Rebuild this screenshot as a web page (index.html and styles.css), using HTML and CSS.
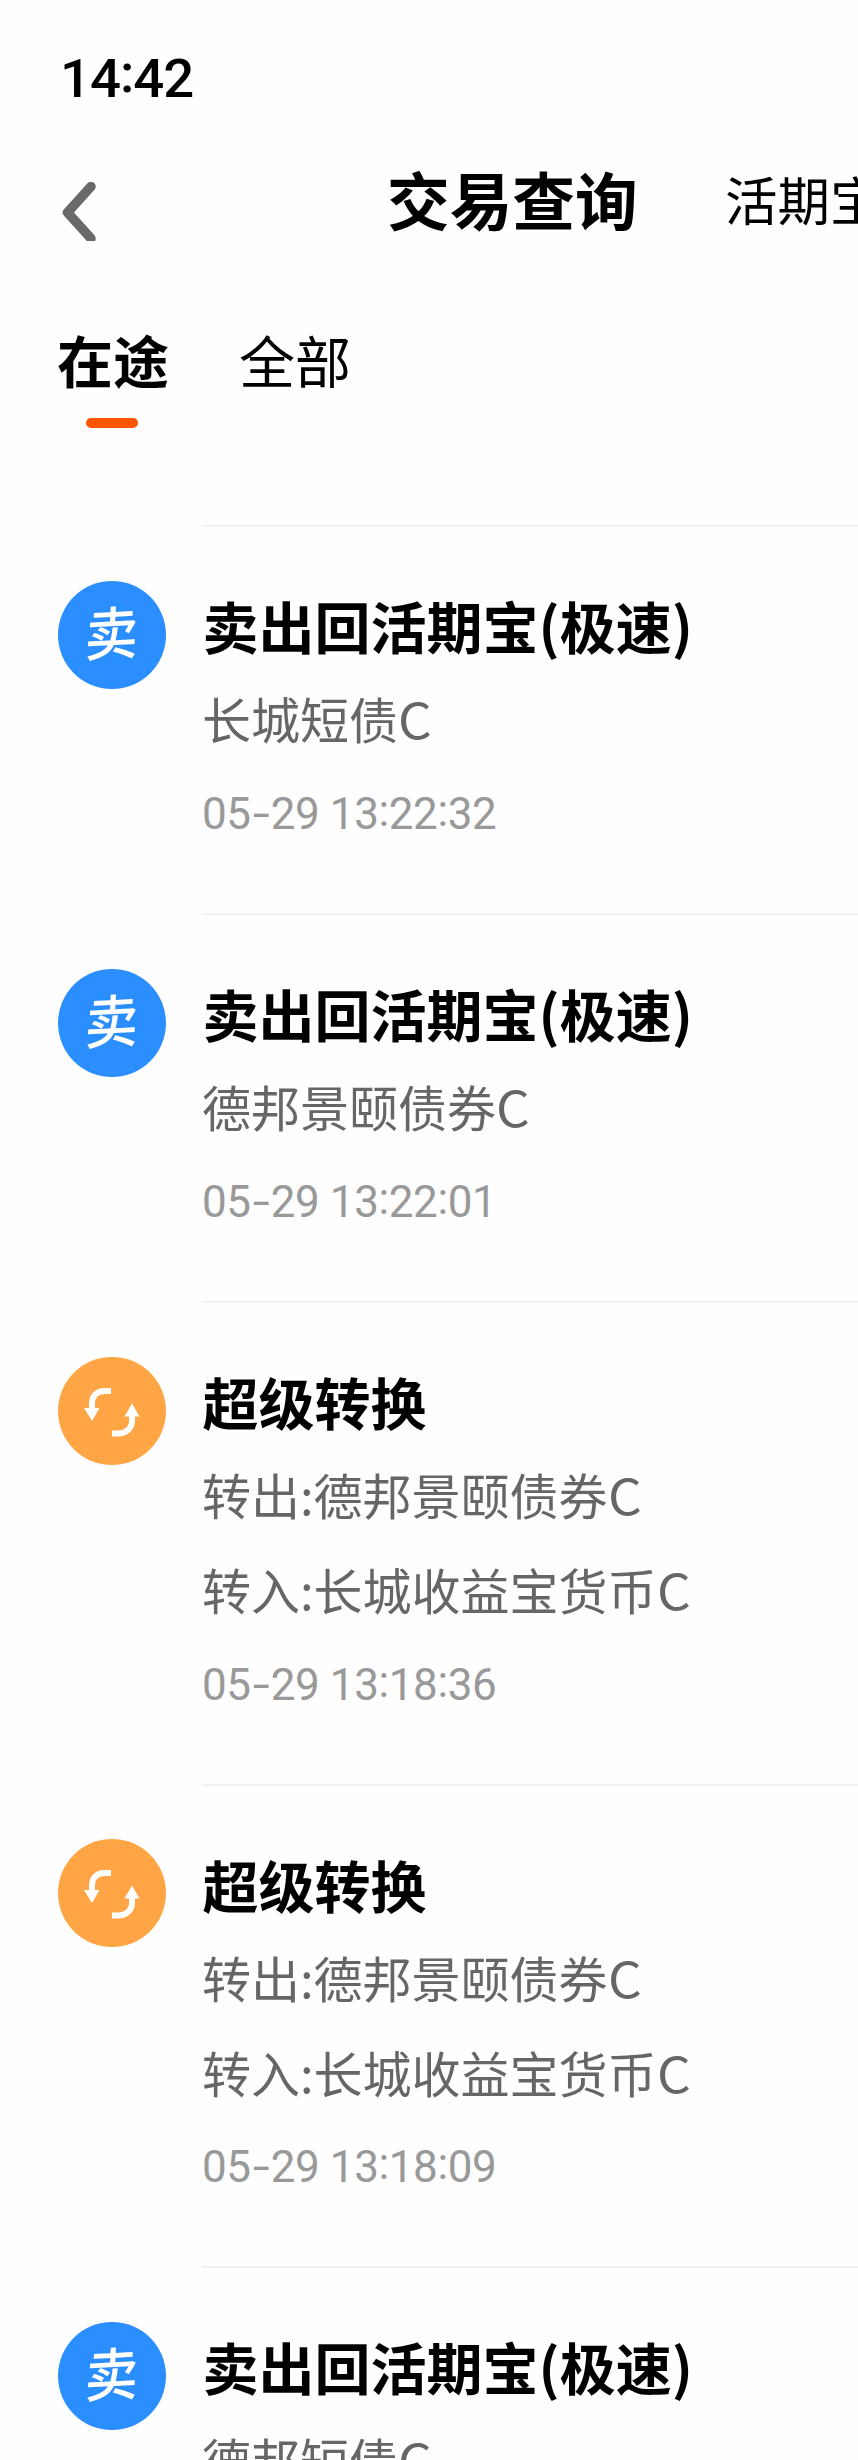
FILE: index.html
```html
<!DOCTYPE html>
<html lang="zh-CN">
<head>
<meta charset="utf-8">
<title>交易查询</title>
<link rel="stylesheet" href="styles.css">
</head>
<body>
<svg class="defs" width="0" height="0" aria-hidden="true">
  <symbol id="swap" viewBox="0 0 108 108">
    <path d="M53 34h-6.500c-8 0-12.500 5-12.500 13v5M54 76.500h6c8 0 14-5 14-13v-7" fill="none" stroke="#fff" stroke-width="6"/>
    <path d="M26 51h15.500l-7.500 13zM66.500 59.500h15l-7.500-13z" fill="#fff"/>
  </symbol>
</svg>
<div class="screen">
  <div class="status">14<span class="colon">:</span>42</div>
  <header class="header">
    <svg class="back" viewBox="0 0 34 59"><path d="M29 4.500 5.500 30.500l23.500 26" fill="none" stroke="#696969" stroke-width="9.500" stroke-linecap="round" stroke-linejoin="round"/></svg>
    <h1 class="title">交易查询</h1>
    <span class="link">活期宝</span>
  </header>
  <nav class="tabs">
    <div class="tab active">在途</div>
    <div class="tab">全部</div>
  </nav>
  <main class="list">
    <section class="item">
      <div class="icon sell"><span>卖</span></div>
      <div class="body">
        <h2>卖出回活期宝(极速)</h2>
        <p>长城短债<em>C</em></p>
        <time>05<i>-</i>29 13<b>:</b>22<b>:</b>32</time>
      </div>
    </section>
    <section class="item">
      <div class="icon sell"><span>卖</span></div>
      <div class="body">
        <h2>卖出回活期宝(极速)</h2>
        <p>德邦景颐债券<em>C</em></p>
        <time>05<i>-</i>29 13<b>:</b>22<b>:</b>01</time>
      </div>
    </section>
    <section class="item">
      <div class="icon convert"><svg><use href="#swap"/></svg></div>
      <div class="body">
        <h2>超级转换</h2>
        <p>转出:德邦景颐债券<em>C</em></p>
        <p>转入:长城收益宝货币<em>C</em></p>
        <time>05<i>-</i>29 13<b>:</b>18<b>:</b>36</time>
      </div>
    </section>
    <section class="item">
      <div class="icon convert"><svg><use href="#swap"/></svg></div>
      <div class="body">
        <h2>超级转换</h2>
        <p>转出:德邦景颐债券<em>C</em></p>
        <p>转入:长城收益宝货币<em>C</em></p>
        <time>05<i>-</i>29 13<b>:</b>18<b>:</b>09</time>
      </div>
    </section>
    <section class="item">
      <div class="icon sell"><span>卖</span></div>
      <div class="body">
        <h2>卖出回活期宝(极速)</h2>
        <p>德邦短债<em>C</em></p>
      </div>
    </section>
  </main>
</div>
</body>
</html>
```
FILE: styles.css
```css
* { box-sizing: border-box; }
body {
  margin: 0;
  background: #fefefe;
  color: #000;
  font-family: "Noto Sans CJK SC", sans-serif;
}
h1, h2, p { margin: 0; }
.defs { display: block; }
.screen {
  width: 858px;
  height: 2460px;
  overflow: hidden;
}
.status {
  height: 155px;
  padding-left: 60px;
  line-height: 156px;
  font-family: Roboto, sans-serif;
  font-size: 54.5px;
  font-weight: 500;
  letter-spacing: -1px;
}
.colon { position: relative; top: -5px; }
.header {
  display: flex;
  height: 85px;
  line-height: 85px;
  white-space: nowrap;
}
.back {
  flex: none;
  width: 34px;
  height: 59px;
  margin: 27px 0 0 62px;
}
.title {
  flex: none;
  width: 338px;
  margin-left: 291px;
  font-size: 62.7px;
  font-weight: 700;
}
.link { flex: none; font-size: 52.5px; line-height: 86px; }
.tabs {
  display: flex;
  gap: 70px;
  height: 285px;
  padding: 74px 0 0 57px;
  font-size: 56px;
  line-height: 90px;
}
.tab {
  display: flex;
  flex-direction: column;
  align-items: center;
}
.active { font-weight: 700; }
.active::after {
  content: "";
  width: 52px;
  height: 10px;
  margin: 13.5px 2px 0 0;
  border-radius: 5px;
  background: #fd5504;
}
.item {
  display: flex;
  padding-left: 58px;
}
.icon {
  flex: none;
  width: 108px;
  height: 108px;
  margin: 55.5px 36px 0 0;
  border-radius: 50%;
}
.icon svg { display: block; width: 108px; height: 108px; }
.sell {
  background: #2b8efe;
  color: #fff;
  font-size: 53px;
  font-weight: 500;
  line-height: 98px;
  text-align: center;
}
.sell span { display: block; transform: rotate(-3deg) skewX(-6deg) scaleY(1.08); }
.convert { background: #ffa546; }
.body {
  flex: 1;
  padding: 53px 0 52px;
  border-top: 2px solid #f1f1f1;
  white-space: nowrap;
}
h2 {
  padding-left: 0.5px;
  font-size: 56px;
  font-weight: 700;
  line-height: 90px;
}
p {
  color: #666;
  font-size: 49px;
  line-height: 95px;
}
p + p { margin-bottom: -0.5px; }
em { display: inline-block; font-style: normal; transform: scaleX(1.08); transform-origin: left; }
time {
  display: block;
  padding-top: 2px;
  color: #999;
  font-family: Roboto, sans-serif;
  font-size: 44px;
  line-height: 94px;
  letter-spacing: -0.4px;
}
time b { position: relative; top: -3px; font-weight: 400; }
time i { display: inline-block; width: 20px; font-style: normal; text-align: center; transform: scaleX(1.4); }
```
